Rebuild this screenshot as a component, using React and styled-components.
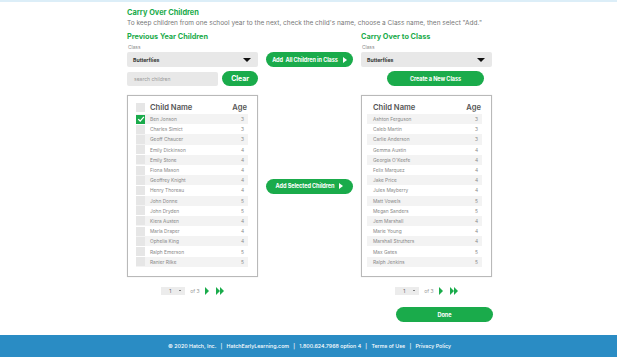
import React from 'react';
import styled, { createGlobalStyle } from 'styled-components';

const GlobalStyle = createGlobalStyle`
  html, body { margin: 0; padding: 0; }
  body {
    font-family: Inter, "Liberation Sans", Arial, sans-serif;
    background: #fff;
    -webkit-font-smoothing: antialiased;
  }
`;

const green = '#1aab4b';

const previous = [
  ['Ben Jonson', 3, true], ['Charles Simict', 3], ['Geoff Chaucer', 3], ['Emily Dickinson', 4],
  ['Emily Stone', 4], ['Fiona Mason', 4], ['Geoffrey Knight', 4], ['Henry Thoreau', 4],
  ['John Donne', 5], ['John Dryden', 5], ['Kiera Austen', 4], ['Marla Draper', 4],
  ['Ophelia King', 4], ['Ralph Emerson', 5], ['Ranier Rilke', 5],
];

const current = [
  ['Ashton Ferguson', 3], ['Caleb Martin', 3], ['Carlie Anderson', 3], ['Gemma Austin', 4],
  ['Georgia O\'Keefe', 4], ['Felix Marquez', 4], ['Jake Price', 4], ['Jules Mayberry', 4],
  ['Matt Vowels', 5], ['Megan Sanders', 5], ['Jem Marshall', 4], ['Marie Young', 4],
  ['Marshall Struthers', 4], ['Max Gates', 5], ['Ralph Jenkins', 5],
];

const Page = styled.div`
  height: 357px;
  display: flex;
  flex-direction: column;
  border-top: 2px solid #dceef8;
  box-sizing: border-box;
`;

const Main = styled.main`
  flex: 1;
  padding: 6px 0 0 127px;
`;

const Title = styled.h1`
  margin: 0;
  font-size: 7.4px;
  line-height: 10px;
  font-weight: 700;
  color: ${green};
`;

const Intro = styled.p`
  margin: 0;
  font-size: 6.5px;
  line-height: 10px;
  color: #777;
  white-space: nowrap;
`;

const Grid = styled.div`
  margin-top: 4px;
  display: grid;
  grid-template-columns: 131px 87px 131px;
  column-gap: 8px;
  grid-template-rows: 10px 10px 15px 20px 190px 20px 28px;
`;

const Heading = styled.h2`
  margin: 0;
  font-size: 7.3px;
  line-height: 10px;
  font-weight: 700;
  color: ${green};
  grid-column: ${p => p.$col};
  grid-row: 1;
`;

const Label = styled.div`
  grid-column: ${p => p.$col};
  grid-row: 2;
  font-size: 4.8px;
  color: #888;
  align-self: center;
  padding-left: 1px;
`;

const Select = styled.div`
  grid-column: ${p => p.$col};
  grid-row: 3;
  background: #e8e8e8;
  border-radius: 2px;
  display: flex;
  align-items: center;
  justify-content: space-between;
  padding: 0 7px 0 6px;
  font-size: 5.2px;
  font-weight: 700;
  color: #333;
`;

const Caret = styled.span`
  width: 0;
  height: 0;
  border-left: ${p => p.$s || 4}px solid transparent;
  border-right: ${p => p.$s || 4}px solid transparent;
  border-top: ${p => (p.$s || 4) * 1.1}px solid #111;
`;

const Button = styled.button`
  border: 0;
  background: ${green};
  color: #fff;
  font-family: inherit;
  font-weight: 700;
  font-size: ${p => p.$fs || 5.6}px;
  height: 15px;
  border-radius: 8px;
  padding: 0 ${p => p.$px || 6}px;
  display: flex;
  align-items: center;
  justify-content: center;
  gap: 5px;
  white-space: nowrap;
  letter-spacing: -0.1px;
  width: ${p => p.$w ? `${p.$w}px` : 'auto'};
`;

const Play = styled.span`
  width: 0;
  height: 0;
  border-top: ${p => p.$h || 3.5}px solid transparent;
  border-bottom: ${p => p.$h || 3.5}px solid transparent;
  border-left: ${p => (p.$h || 3.5) * 1.2}px solid ${p => p.$color || '#fff'};
`;

const Middle = styled.div`
  grid-column: 2;
  grid-row: ${p => p.$row};
  align-self: ${p => p.$align || 'stretch'};
  display: flex;
  justify-content: center;
  padding-top: ${p => p.$pt || 0}px;
`;

const SearchRow = styled.div`
  grid-column: 1;
  grid-row: 4;
  display: flex;
  gap: 4px;
  align-items: center;
  padding-top: 3px;
`;

const Search = styled.div`
  width: 92px;
  height: 14px;
  box-sizing: border-box;
  background: #e8e8e8;
  border-radius: 2px;
  font-size: 5px;
  color: #999;
  display: flex;
  align-items: center;
  padding-left: 7px;
`;

const CreateRow = styled.div`
  grid-column: 3;
  grid-row: 4;
  display: flex;
  justify-content: center;
  align-items: center;
  padding: 3px 0 0 18px;
`;

const Box = styled.div`
  grid-column: ${p => p.$col};
  grid-row: 5;
  margin-top: 8px;
  border: 1px solid #b9b9b9;
  box-shadow: 0 0 1px rgba(0,0,0,0.15);
  padding: 5px 9px 0 ${p => p.$pl}px;
  box-sizing: border-box;
`;

const HeaderRow = styled.div`
  display: flex;
  align-items: center;
  height: 13px;
  font-size: 7.6px;
  font-weight: 600;
  color: #555;
  padding-right: 1px;
`;

const Row = styled.div`
  display: flex;
  align-items: center;
  height: 10.2px;
  font-size: 4.8px;
  color: #888;
  background: ${p => p.$alt ? '#f3f3f3' : 'transparent'};
  padding-right: 4px;
`;

const Check = styled.span`
  width: 9px;
  height: 9px;
  flex: none;
  background: ${p => p.$on ? green : '#e6e6e6'};
  margin-right: 5px;
  display: flex;
  align-items: center;
  justify-content: center;
`;

const Name = styled.span`
  flex: 1;
  padding-left: ${p => p.$pl || 0}px;
`;

const Age = styled.span`
  text-align: right;
`;

const Pager = styled.div`
  grid-column: ${p => p.$col};
  grid-row: 6;
  display: flex;
  align-items: center;
  justify-content: center;
  gap: 5px;
  padding-top: 7px;
  font-size: 5px;
  color: #999;
`;

const PageSelect = styled.div`
  width: 24px;
  height: 8px;
  background: #ececec;
  display: flex;
  align-items: center;
  justify-content: space-between;
  padding: 0 4px 0 8px;
  box-sizing: border-box;
  color: #666;
`;

const Skip = styled.span`
  display: flex;
  margin-left: 2px;
`;

const DoneRow = styled.div`
  grid-column: 3;
  grid-row: 7;
  display: flex;
  justify-content: flex-end;
  align-items: flex-start;
  padding-top: 10px;
  margin-right: -1px;
`;

const Footer = styled.footer`
  height: 22px;
  background: #2a8cc4;
  color: #fff;
  font-size: 5.3px;
  font-weight: 500;
  display: flex;
  align-items: center;
  justify-content: center;
  padding-left: 2px;
  white-space: pre;
`;

function CheckMark() {
  return (
    <svg width="8" height="8" viewBox="0 0 10 10">
      <path d="M1.5 5.2 L4 7.6 L8.6 2.4" stroke="#fff" strokeWidth="1.6" fill="none" />
    </svg>
  );
}

function PagerBar({ col }) {
  return (
    <Pager $col={col}>
      <PageSelect>1 <Caret $s={1.6} /></PageSelect>
      <span>of 3</span>
      <Play $h={4} $color={green} />
      <Skip>
        <Play $h={4} $color={green} />
        <Play $h={4} $color={green} />
      </Skip>
    </Pager>
  );
}

export default function App() {
  return (
    <>
      <GlobalStyle />
      <Page>
        <Main>
          <Title>Carry Over Children</Title>
          <Intro>To keep children from one school year to the next, check the child's name, choose a Class name, then select "Add."</Intro>
          <Grid>
            <Heading $col={1}>Previous Year Children</Heading>
            <Heading $col={3}>Carry Over to Class</Heading>
            <Label $col={1}>Class</Label>
            <Label $col={3}>Class</Label>
            <Select $col={1}>Butterflies <Caret /></Select>
            <Select $col={3}>Butterflies <Caret /></Select>
            <Middle $row={3}>
              <Button $w={87}>Add&nbsp; All Children in Class <Play /></Button>
            </Middle>
            <SearchRow>
              <Search>search children</Search>
              <Button $fs={7} $w={36} $px={0}>Clear</Button>
            </SearchRow>
            <CreateRow>
              <Button $w={97}>Create a New Class</Button>
            </CreateRow>
            <Box $col={1} $pl={8}>
              <HeaderRow>
                <Check />
                <Name>Child Name</Name>
                <Age>Age</Age>
              </HeaderRow>
              {previous.map(([n, a, on], i) => (
                <Row key={n} $alt={i % 2 === 0}>
                  <Check $on={on}>{on && <CheckMark />}</Check>
                  <Name>{n}</Name>
                  <Age>{a}</Age>
                </Row>
              ))}
            </Box>
            <Middle $row={5} $align="center" $pt={8}>
              <Button $w={87}>Add Selected Children <Play /></Button>
            </Middle>
            <Box $col={3} $pl={5}>
              <HeaderRow>
                <Name $pl={6}>Child Name</Name>
                <Age>Age</Age>
              </HeaderRow>
              {current.map(([n, a], i) => (
                <Row key={n} $alt={i % 2 === 0}>
                  <Name $pl={6}>{n}</Name>
                  <Age>{a}</Age>
                </Row>
              ))}
            </Box>
            <PagerBar col={1} />
            <PagerBar col={3} />
            <DoneRow>
              <Button $w={97}>Done</Button>
            </DoneRow>
          </Grid>
        </Main>
        <Footer>{'© 2020 Hatch, Inc.   |   HatchEarlyLearning.com   |   1.800.624.7968 option 4   |   Terms of Use   |   Privacy Policy'}</Footer>
      </Page>
    </>
  );
}
